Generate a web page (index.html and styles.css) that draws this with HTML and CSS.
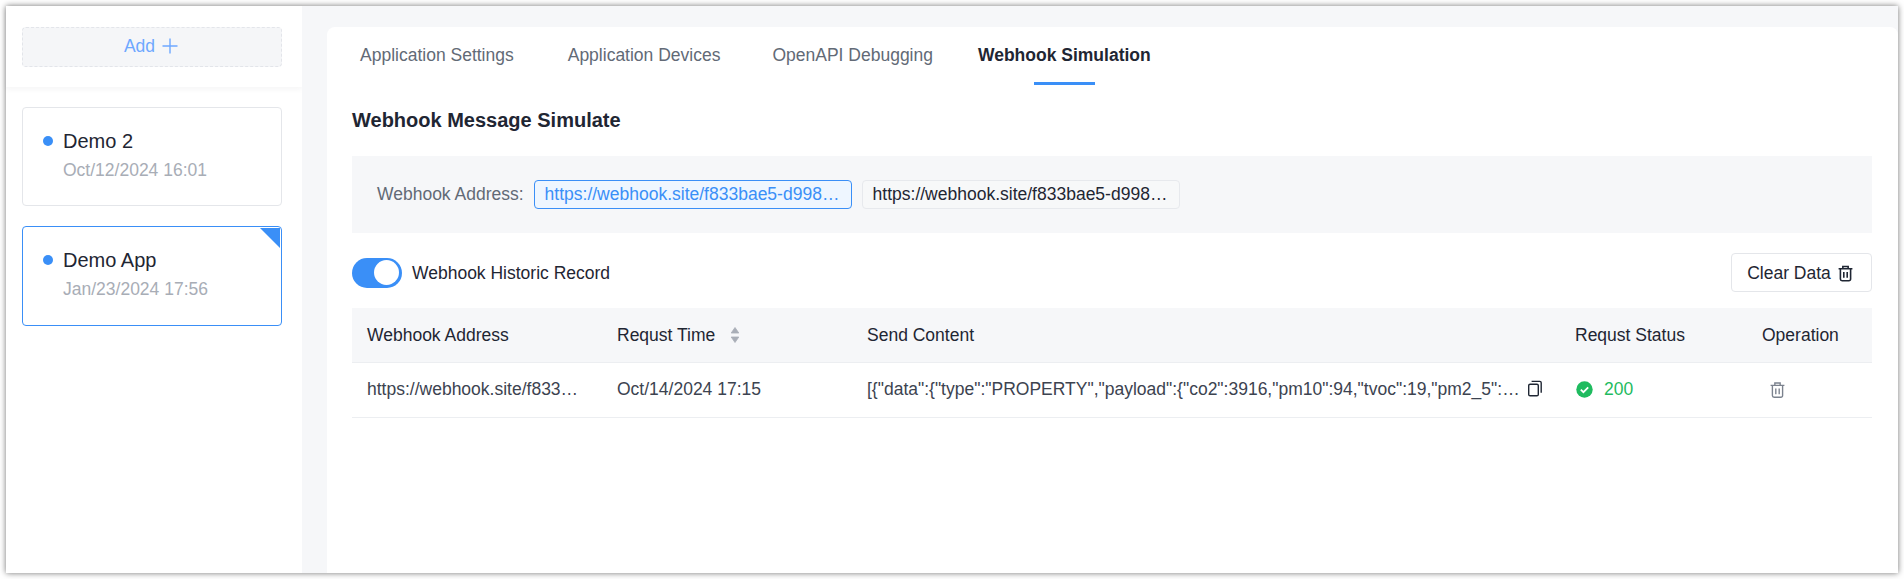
FILE: index.html
```html
<!DOCTYPE html>
<html lang="en">
<head>
<meta charset="utf-8">
<title>Webhook Simulation</title>
<link rel="stylesheet" href="styles.css">
</head>
<body>
<div class="window">
  <aside class="sidebar">
    <div class="add-area">
      <button class="add-btn">Add
        <svg class="plus" width="16" height="16" viewBox="0 0 16 16"><path d="M8 .5v15M.5 8h15" stroke="currentColor" stroke-width="1.4" fill="none"/></svg>
      </button>
    </div>
    <div class="app-list">
      <div class="app-card">
        <div class="app-name"><span class="dot"></span>Demo 2</div>
        <div class="app-date">Oct/12/2024 16:01</div>
      </div>
      <div class="app-card selected">
        <span class="corner"></span>
        <div class="app-name"><span class="dot"></span>Demo App</div>
        <div class="app-date">Jan/23/2024 17:56</div>
      </div>
    </div>
  </aside>
  <main class="main">
    <section class="content">
      <nav class="tabs">
        <span class="tab">Application Settings</span>
        <span class="tab">Application Devices</span>
        <span class="tab openapi">OpenAPI Debugging</span>
        <span class="tab active">Webhook Simulation</span>
      </nav>
      <div class="body">
        <h2 class="title">Webhook Message Simulate</h2>
        <div class="panel">
          <span class="panel-label">Webhook Address:</span>
          <span class="tag on">https://webhook.site/f833bae5-d998-4c1e-9b7a-2f6d0c1e7a55</span>
          <span class="tag">https://webhook.site/f833bae5-d998-4c1e-9b7a-2f6d0c1e7a55</span>
        </div>
        <div class="toolbar">
          <div class="toggle-wrap">
            <span class="switch"><span class="knob"></span></span>
            <span class="toggle-label">Webhook Historic Record</span>
          </div>
          <button class="clear-btn">Clear Data
            <svg width="17" height="17" viewBox="0 0 16 16" fill="none" stroke="currentColor" stroke-width="1.5"><path d="M1.5 3.6h13M5.5 3.4V1.4h5v2M3.2 3.8v9.4a1.6 1.6 0 0 0 1.6 1.6h6.4a1.6 1.6 0 0 0 1.6-1.6V3.8M6.4 6.6v5.4M9.6 6.6v5.4"/></svg>
          </button>
        </div>
        <div class="table">
          <div class="row head">
            <div class="cell c1">Webhook Address</div>
            <div class="cell c2">Requst Time
              <svg class="sort" width="10" height="18" viewBox="0 0 10 18"><path d="M5 1.5 8.8 7H1.2zM5 16.5 1.2 11h7.6z" fill="#a9aeb7" stroke="#a9aeb7" stroke-width=".8" stroke-linejoin="round"/></svg>
            </div>
            <div class="cell c3">Send Content</div>
            <div class="cell c4">Requst Status</div>
            <div class="cell c5">Operation</div>
          </div>
          <div class="row">
            <div class="cell c1"><span class="clip">https://webhook.site/f833bae5-d998-4c1e</span></div>
            <div class="cell c2">Oct/14/2024 17:15</div>
            <div class="cell c3">
              <span class="clip">[{"data":{"type":"PROPERTY","payload":{"co2":3916,"pm10":94,"tvoc":19,"pm2_5":65,"humidity":48,"temperature":24}}}]</span>
              <svg class="copy" width="16" height="17" viewBox="0 0 16 17" fill="none" stroke="#1f2633" stroke-width="1.4"><rect x="1.7" y="4.2" width="9.6" height="11.6" rx="1.4"/><path d="M4.6 1.4h8.2a1.4 1.4 0 0 1 1.4 1.4v10"/></svg>
            </div>
            <div class="cell c4 status">
              <svg width="17" height="17" viewBox="0 0 17 17"><circle cx="8.5" cy="8.5" r="8.2" fill="#1fbb5f"/><path d="M4.8 8.7l2.6 2.5 4.8-4.8" stroke="#fff" stroke-width="1.8" fill="none"/></svg>
              <span>200</span>
            </div>
            <div class="cell c5">
              <svg class="del" width="17" height="18" viewBox="0 0 16 16" fill="none" stroke="#7b828e" stroke-width="1.3"><path d="M1.5 3.6h13M5.5 3.4V1.4h5v2M3.2 3.8v9.4a1.6 1.6 0 0 0 1.6 1.6h6.4a1.6 1.6 0 0 0 1.6-1.6V3.8M6.4 6.6v5.4M9.6 6.6v5.4"/></svg>
            </div>
          </div>
        </div>
      </div>
    </section>
  </main>
</div>
</body>
</html>
```

FILE: styles.css
```css
* { box-sizing: border-box; }
html, body { margin: 0; height: 100%; background: #fff; overflow: hidden; }
body { font-family: "Liberation Sans", Arial, sans-serif; font-size: 17.5px; color: #1f2633; padding: 6px; }
button { font-family: inherit; cursor: pointer; }

.window { display: flex; height: 567px; background: #fff; box-shadow: 0 0 6px rgba(0, 0, 0, .55); }

.sidebar { width: 296px; flex: none; background: #fff; }
.add-area { height: 81px; padding: 21px 20px 0 16px; box-shadow: 0 2px 6px rgba(30, 40, 60, .05); }
.add-btn { width: 260px; height: 40px; display: flex; align-items: center; justify-content: center; gap: 7px; background: #f5f6f8; border: 1px dashed #e3e5ea; border-radius: 4px; color: #6ea8ff; font-size: 17.5px; padding: 0 2px 2px 0; }
.app-list { display: flex; flex-direction: column; gap: 20px; padding: 20px 20px 0 16px; }
.app-card { position: relative; height: 99px; padding: 21px 20px 0; border: 1px solid #e4e6ea; border-radius: 4px; }
.app-card.selected { height: 100px; border-color: #3a8ff7; }
.corner { position: absolute; top: 1px; right: 1px; width: 0; height: 0; border-style: solid; border-width: 0 20px 20px 0; border-color: transparent #3a8ff7 transparent transparent; }
.app-name { display: flex; align-items: center; font-size: 20px; line-height: 24px; color: #1f2633; }
.dot { width: 10px; height: 10px; margin-right: 10px; border-radius: 50%; background: #3a8ff7; }
.app-date { margin: 7px 0 0 20px; font-size: 17.5px; line-height: 20px; color: #a8adb6; }

.main { flex: 1; min-width: 0; background: #f6f7f9; padding: 21px 0 0 25px; display: flex; }
.content { flex: 1; min-width: 0; background: #fff; border-radius: 8px 8px 0 0; }
.tabs { display: flex; gap: 54px; height: 58px; padding-left: 33px; }
.tab { position: relative; line-height: 56px; color: #626a76; font-size: 17.5px; }
.tab.openapi { margin-left: -2px; }
.tab.active { margin-left: -9px; color: #1f2633; font-weight: 700; }
.tab.active::after { content: ""; position: absolute; left: 50%; bottom: 0; width: 61px; height: 3px; margin-left: -30px; background: #3a8ff7; }

.body { padding: 0 26px 0 25px; }
.title { margin: 22px 0 0; font-size: 20px; line-height: 26px; font-weight: 700; color: #1f2633; }
.panel { display: flex; align-items: center; height: 77px; margin-top: 23px; padding-left: 25px; background: #f6f7f9; }
.panel-label { color: #626a76; margin-right: 10px; }
.tag { display: block; width: 318px; height: 29px; line-height: 27px; padding: 0 10px; margin-right: 10px; border: 1px solid #e7e9ed; border-radius: 4px; background: #f7f8f9; white-space: nowrap; overflow: hidden; text-overflow: ellipsis; }
.tag.on { border-color: #3a8ff7; background: #eef6ff; color: #3a8ff7; }

.toolbar { display: flex; justify-content: space-between; align-items: center; height: 39px; margin-top: 20px; }
.toggle-wrap { display: flex; align-items: center; gap: 10px; }
.toggle-label { padding-top: 1px; }
.switch { display: flex; align-items: center; justify-content: flex-end; width: 50px; height: 30px; padding-right: 3px; border-radius: 15px; background: #3a8ff7; }
.knob { width: 25px; height: 25px; border-radius: 50%; background: #fff; }
.clear-btn { display: flex; align-items: center; justify-content: center; gap: 6px; width: 141px; height: 39px; padding: 1px 2px 0 0; background: #fff; border: 1px solid #e4e6ea; border-radius: 4px; color: #1f2633; font-size: 17.5px; }

.table { margin-top: 16px; }
.row { display: flex; align-items: center; height: 55px; border-bottom: 1px solid #eceef1; padding-bottom: 1px; }
.row.head { height: 55px; background: #f6f7f9; padding-bottom: 0; }
.cell { display: flex; align-items: center; padding: 0 15px; color: #3c4350; min-width: 0; }
.head .cell { color: #1f2633; }
.c1 { width: 250px; padding-right: 20px; }
.c2 { width: 250px; gap: 15px; }
.c3 { width: 708px; gap: 3px; padding-right: 17px; }
.c4 { width: 187px; }
.c5 { width: 125px; }
.clip { flex: 1; min-width: 0; white-space: nowrap; overflow: hidden; text-overflow: ellipsis; }
.sort { flex: none; }
.copy { flex: none; margin-bottom: 2px; }
.status { gap: 11px; color: #1fbb5f; padding-left: 16px; }
.del { margin-left: 7px; }
```
